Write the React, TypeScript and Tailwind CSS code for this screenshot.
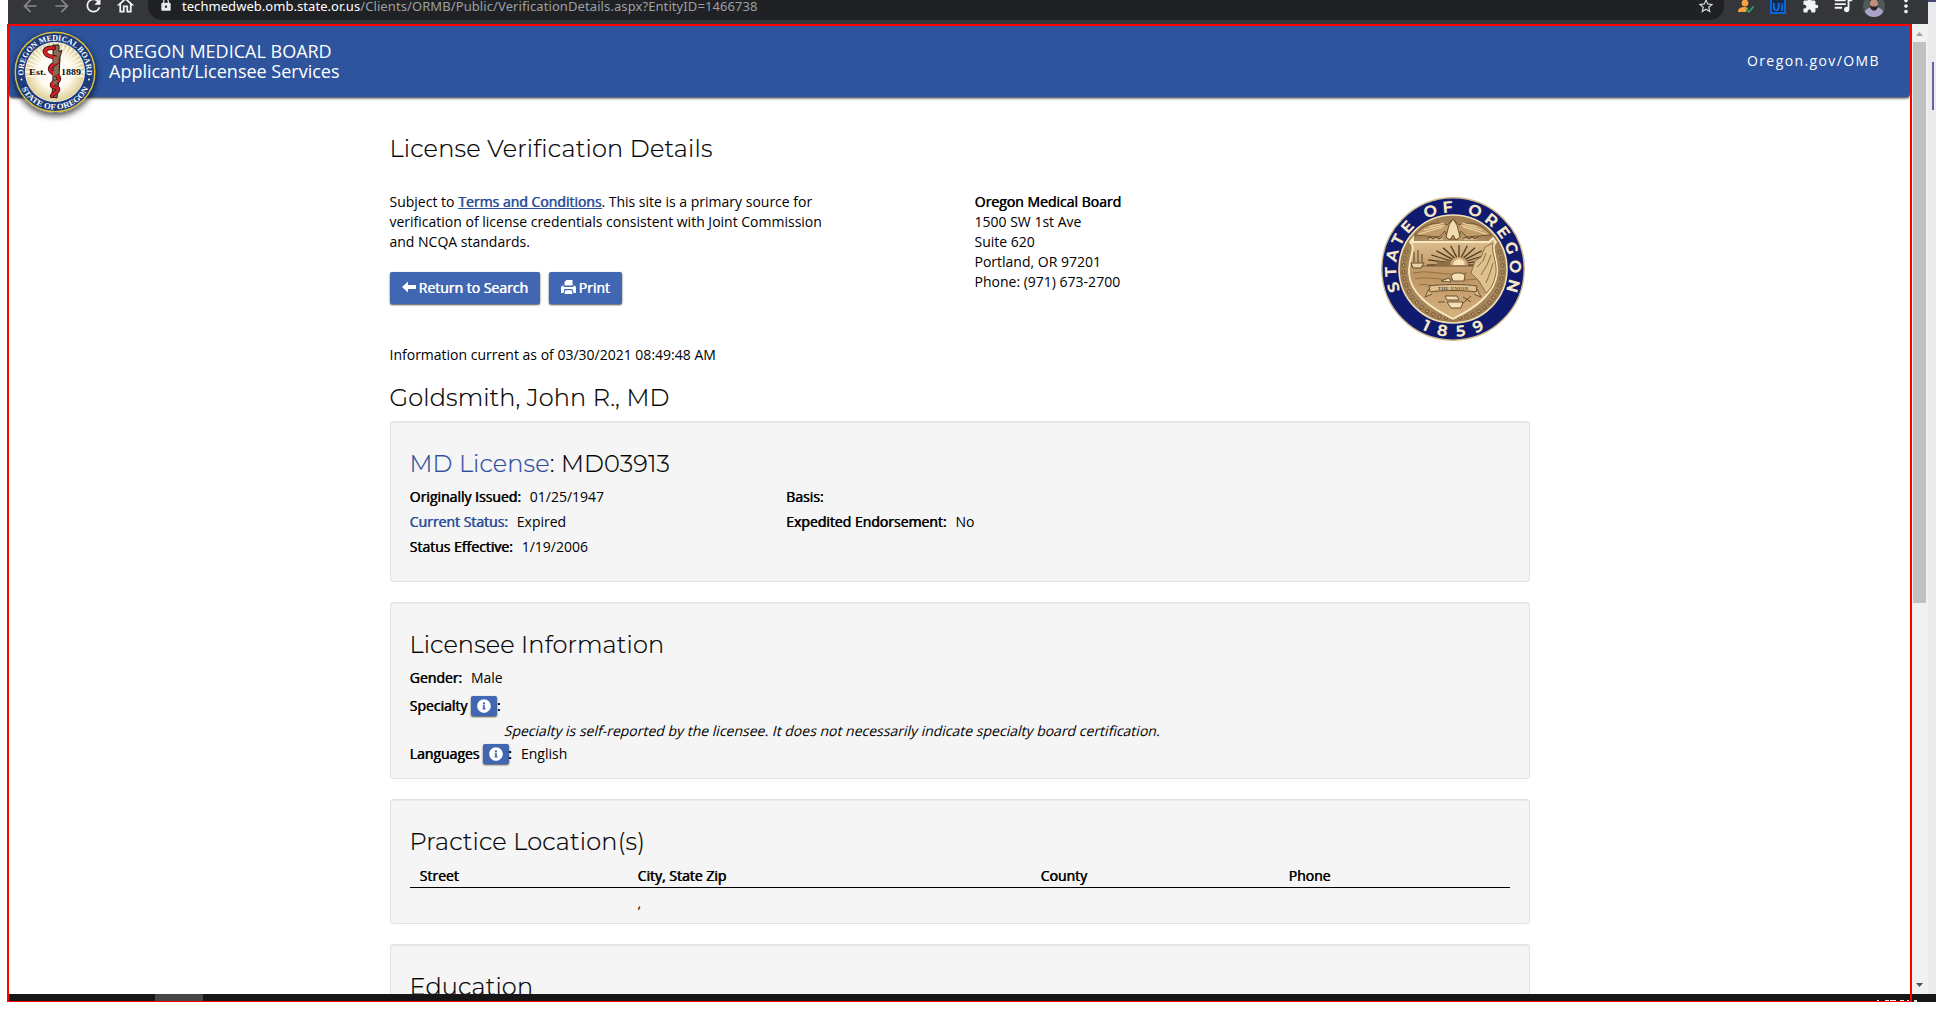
import type { ReactNode } from "react";
import { FaInfoCircle } from "react-icons/fa";
import { MdArrowBack, MdArrowForward, MdRefresh, MdOutlineHome, MdLock, MdStarBorder, MdQueueMusic, MdMoreVert, MdExtension } from "react-icons/md";

const HEAD = "font-['Montserrat','Inter',sans-serif] text-[24px] leading-[30px] font-light whitespace-nowrap [-webkit-text-stroke:0.2px_currentColor]";

function B({ children, className = "" }: { children: ReactNode; className?: string }) {
  return <span className={"[text-shadow:0.6px_0_0_currentColor] " + className}>{children}</span>;
}

function MedicalBoardSeal() {
  const rays = Array.from({ length: 40 }, (_, i) => (i * Math.PI) / 20);
  return (
    <svg viewBox="-41 -41 82 82" className="block h-[82px] w-[82px] rounded-full shadow-[0_3px_6px_rgba(0,0,0,0.7)]">
      <defs>
        <path id="omb-top" d="M-30.6 8A31.6 31.6 0 1 1 30.6 8" />
        <path id="omb-bottom" d="M-37.4 0A37.4 37.4 0 0 0 37.4 0" />
        <radialGradient id="omb-glow">
          <stop offset="0" stopColor="#fff" />
          <stop offset="0.55" stopColor="#fdfbf1" />
          <stop offset="1" stopColor="#dfcf94" />
        </radialGradient>
      </defs>
      <circle r="41" fill="#1d3c7c" />
      <circle r="39.8" fill="none" stroke="#d9bd3c" strokeWidth="1.5" />
      <circle r="29.6" fill="url(#omb-glow)" stroke="#fff" strokeWidth="0.8" />
      {rays.map((a) =>
        Math.sin(a) < 0.2 ? (
          <line key={a} x1={Math.cos(a) * 13} y1={Math.sin(a) * 13} x2={Math.cos(a) * 29} y2={Math.sin(a) * 29} stroke="#fffdf2" strokeWidth="1.3" />
        ) : null
      )}
      <g fill="#fff" fontFamily="'Liberation Serif', serif" fontWeight="700" fontSize="8">
        <text textAnchor="middle"><textPath href="#omb-top" startOffset="50%" textLength="106" lengthAdjust="spacingAndGlyphs">OREGON MEDICAL BOARD</textPath></text>
        <text textAnchor="middle"><textPath href="#omb-bottom" startOffset="50%" textLength="83" lengthAdjust="spacingAndGlyphs">STATE OF OREGON</textPath></text>
      </g>
      <circle cx="-33.500" cy="7.5" r="0.9" fill="#fff" />
      <circle cx="34" cy="7.5" r="0.9" fill="#fff" />
      <path d="M-2-27L4-27 4-20 7-22 5-15 4 5 2 26-3 25-2 5Z" fill="#8a6a50" stroke="#221a14" strokeWidth="1" />
      <path d="M-1-24C-8-25-12-22-9-18S3-16 3-12-5-8-5-3 5 2 4 7-3 9-3 13 4 14 3 18-2 20-3 24" fill="none" stroke="#3a0d0d" strokeWidth="4.4" strokeLinecap="round" />
      <path d="M-1-24C-8-25-12-22-9-18S3-16 3-12-5-8-5-3 5 2 4 7-3 9-3 13 4 14 3 18-2 20-3 24" fill="none" stroke="#cf2127" strokeWidth="3" strokeLinecap="round" />
      <path d="M-1-15L4-16 3-9-2-8ZM-2-1L3-3 3 2-2 4ZM-2 9L2 8 2 12-2 13Z" fill="#8a6a50" />
      <g fill="#111" fontFamily="'Liberation Serif', serif" fontWeight="700" fontSize="8">
        <text x="-26" y="3" textLength="17" lengthAdjust="spacingAndGlyphs">Est.</text>
        <text x="6" y="3" textLength="20" lengthAdjust="spacingAndGlyphs">1889</text>
      </g>
    </svg>
  );
}

function StateSeal() {
  const rays = Array.from({ length: 13 }, (_, i) => Math.PI + (i * Math.PI) / 12);
  const beads = Array.from({ length: 29 }, (_, i) => -0.35 + (i * (Math.PI + 0.7)) / 28);
  return (
    <svg viewBox="-72 -72 144 144" className="block h-[144px] w-[144px]">
      <defs>
        <path id="or-sides" d="M-40.2 40.2A56.8 56.8 0 1 1 40.2 40.2" />
        <path id="or-bottom" d="M-68 0A68 68 0 0 0 68 0" />
        <radialGradient id="or-bronze">
          <stop offset="0" stopColor="#d9b98a" />
          <stop offset="1" stopColor="#9c7b50" />
        </radialGradient>
        <linearGradient id="or-shield" x1="0" y1="0" x2="0" y2="1">
          <stop offset="0" stopColor="#dfc091" />
          <stop offset="0.45" stopColor="#bd9564" />
          <stop offset="1" stopColor="#d6b27f" />
        </linearGradient>
      </defs>
      <circle r="71.2" fill="#101a6e" stroke="#cfb98c" strokeWidth="1.4" />
      <circle r="54" fill="url(#or-bronze)" stroke="#f1e2b6" strokeWidth="1.6" />
      <g fill="#f6e8c4" fontFamily="Montserrat, Lato, sans-serif" fontWeight="700" fontSize="16">
        <text textAnchor="middle"><textPath href="#or-sides" startOffset="50%" textLength="222">STATE OF OREGON</textPath></text>
        <text textAnchor="middle"><textPath href="#or-bottom" startOffset="50%" textLength="66">1859</textPath></text>
      </g>
      {beads.map((a) => (
        <circle key={a} cx={Math.cos(a) * 49.5} cy={Math.sin(a) * 49.5} r="1.5" fill="#c8a877" stroke="#5d4527" strokeWidth="0.8" />
      ))}
      <path d="M-40-27H36L40-31 43-27C37-22 45-10 44 4 42 24 24 38 0 50-24 38-43 24-44 4-45-10-36-22-43-27L-40-31Z" fill="url(#or-shield)" stroke="#f7e9bf" strokeWidth="1.8" />
      <path d="M-38-34C-28-46-16-48-6-44L0-50 6-44C16-48 28-46 38-34L14-32 8-38 5-30H-5L-8-38-14-32Z" fill="#c09c69" stroke="#74572f" strokeWidth="1" />
      <path d="M-4-44L-7-32-3-29 0-34 3-29 7-32 4-44 0-50Z" fill="#f1dcae" stroke="#5d4527" strokeWidth="0.9" />
      <path d="M-34-35L-10-42M-29-39L-8-44M-24-42L-9-46M34-35L10-42M29-39L8-44M24-42L9-46M-24-30H-10M10-30H24" stroke="#f0dcae" strokeWidth="1" />
      <path d="M-26-30l3-2 3 2 3-2 3 2 3-2M10-30l3-2 3 2 3-2 3 2 3-2" fill="none" stroke="#5d4527" strokeWidth="1" />
      {rays.map((a) => (
        <line key={a} x1={6 + Math.cos(a) * 9} y1={-4 + Math.sin(a) * 8} x2={6 + Math.cos(a) * 32} y2={-4 + Math.sin(a) * 20} stroke="#4d3b24" strokeWidth="1.3" />
      ))}
      <path d="M0-4A6 6 0 0 1 12-4Z" fill="#f6e4b5" />
      <path d="M-42-3H20" stroke="#5d4527" strokeWidth="0.8" />
      <path d="M-42-6H-29L-32-1H-40ZM-39-7V-17M-35-7V-19M-31-7V-15" fill="#ecd4a2" stroke="#5d4527" strokeWidth="1" />
      <path d="M-18-3L-14-9-10-6-5-10-2-3Z" fill="#8d6f46" />
      <path d="M18 4L22-8 28-12 32-22 40-26C38-16 44-8 43 4 41 14 38 20 33 24L26 12Z" fill="#dfc190" stroke="#8d6f46" strokeWidth="1" />
      <path d="M24-2L30-8 33-16M28 6L34-4 38-14M33 14L37 4 40-6" fill="none" stroke="#8d6f46" strokeWidth="1" />
      <path d="M-40 4C-20 0-10 8 14 4M-38 10C-20 6-10 14 24 10M-34 16C-26 14-22 18-16 16" fill="none" stroke="#94703f" strokeWidth="1" />
      <path d="M-2 7C0 3 9 3 12 6L11 12H0ZM-12 12L-4 9-2 13Z" fill="#f3dfb2" stroke="#5d4527" strokeWidth="0.9" />
      <path d="M-24 17C-14 15 14 15 24 17L23 23C12 21-12 21-23 23ZM-24 20L-28 28-21 25M24 20L28 28 21 25" fill="#dcbf8c" stroke="#5d4527" strokeWidth="0.9" />
      <text x="0" y="21" textAnchor="middle" fontSize="4.6" fontFamily="'Liberation Serif', serif" fontWeight="700" fill="#5d4527" textLength="30">THE UNION</text>
      <path d="M-8 27H4L6 31H-6ZM-6 33H10L8 39H-2ZM10 28L18 33M18 27L9 35M-15 33H-8" fill="#f3dfb2" stroke="#5d4527" strokeWidth="0.9" />
    </svg>
  );
}

function BrowserBar() {
  return (
    <div className="ml-2 flex h-6 w-[1920px] items-start overflow-hidden bg-[#35363a] text-[#f1f3f4]">
      <MdArrowBack className="mt-[-4px] ml-[12px] size-5 text-[#86888c]" />
      <MdArrowForward className="mt-[-4px] ml-[12px] size-5 text-[#86888c]" />
      <MdRefresh className="mt-[-5px] ml-[11px] size-[21px]" />
      <MdOutlineHome className="mt-[-5px] ml-[11px] size-[21px]" />
      <div className="ml-[12px] flex h-5 w-[1576px] items-start rounded-b-[14px] bg-[#202124] pr-[9px] pl-[11px]">
        <MdLock className="mt-[-2px] size-[14px] text-[#e8eaed]" />
        <div className="mt-[-4px] ml-[9px] font-['Noto_Sans',sans-serif] text-[13px] leading-5 whitespace-nowrap text-[#9aa0a6]">
          <span className="tracking-[0.05px] text-white">techmedweb.omb.state.or.us</span>
          <span className="tracking-[0.09px]">/Clients/ORMB/Public/VerificationDetails.aspx?EntityID=1466738</span>
        </div>
        <MdStarBorder className="mt-[-3px] ml-auto size-[18px] text-[#d5d7da]" />
      </div>
      <svg viewBox="0 0 16 14" className="mt-[-1px] ml-[14px] h-[14px] w-4">
        <circle cx="7" cy="4" r="3.4" fill="#f9a13c" />
        <path d="M0 13C0 9 3 8 7 8L10 9 8 13Z" fill="#f9a13c" />
        <path d="M8 10L11 13 15.500 7.500" fill="none" stroke="#2fa866" strokeWidth="1.6" />
      </svg>
      <div className="mt-[-2px] ml-[16px] flex h-4 w-4 items-center justify-center border-2 border-[#0a66d8] bg-[#15294a] font-['Open_Sans',sans-serif] text-[11px] leading-none font-bold text-[#0a74f0]">Ui</div>
      <MdExtension className="mt-[-3px] ml-[16px] size-[17px]" />
      <MdQueueMusic className="mt-[-6px] ml-[13px] size-[22px]" />
      <svg viewBox="0 0 22 22" className="mt-[-5px] ml-[9px] size-[22px]">
        <defs><clipPath id="avatar-clip"><circle cx="11" cy="11" r="11" /></clipPath></defs>
        <g clipPath="url(#avatar-clip)">
          <rect width="22" height="22" fill="#4d5a58" />
          <path d="M0 22C1 13 7 12 11 12S21 13 22 22Z" fill="#aaa3c8" />
          <ellipse cx="11" cy="8.500" rx="4" ry="5" fill="#c08f7a" />
          <path d="M7 10C7 14 9 15.500 11 15.500S15 14 15 10C14 12 8 12 7 10Z" fill="#2d2222" />
          <path d="M6.500 7C6.500 2 15.500 2 15.500 7L14 5H8Z" fill="#1f1a1a" />
        </g>
      </svg>
      <MdMoreVert className="mt-[-5px] ml-[10px] size-[22px]" />
    </div>
  );
}

function SiteHeader() {
  return (
    <header className="relative z-10 flex h-[71px] shrink-0 items-start rounded-b-[4px] bg-[#2d549c] pl-[5px] font-['Open_Sans',sans-serif] text-white shadow-[0_1px_3px_rgba(0,0,0,0.9)]">
      <div className="mt-[5px] h-[82px] w-[82px] shrink-0"><MedicalBoardSeal /></div>
      <div className="mt-[15px] ml-[13px] text-[18px] leading-5 whitespace-nowrap">
        <div>OREGON MEDICAL BOARD</div>
        <div>Applicant/Licensee Services</div>
      </div>
      <div className="mt-[25px] mr-[30px] ml-auto text-[14px] leading-5 tracking-[1.4px]">Oregon.gov/OMB</div>
    </header>
  );
}

function Panel({ children, className }: { children: ReactNode; className: string }) {
  return (
    <section className={"rounded-[3px] border border-[#e2e2e2] bg-[#f5f5f5] px-[19px] shadow-[inset_0_1px_1px_rgba(0,0,0,0.05)] " + className}>
      {children}
    </section>
  );
}

function InfoButton() {
  return (
    <span className="ml-[3.5px] flex h-5 w-[26px] items-center justify-center rounded-[2px] bg-[#4267b2] shadow-[0_1px_2px_rgba(0,0,0,0.7)]">
      <FaInfoCircle className="size-[14px] text-white" />
    </span>
  );
}

function Field({ label, value, blue }: { label: string; value?: string; blue?: boolean }) {
  return (
    <div className="flex h-[25px] items-center gap-[9px]">
      <B className={blue ? "text-[#2d4f9b]" : ""}>{label}</B>
      {value && <span>{value}</span>}
    </div>
  );
}

function Content() {
  return (
    <main className="ml-[380.5px] w-[1140px] font-['Open_Sans',sans-serif] text-[14px] leading-5 whitespace-nowrap text-black">
      <h1 className={HEAD + " mt-[37px] tracking-[0.24px]"}>License Verification Details</h1>
      <div className="mt-[28px] flex h-[144px]">
        <div className="w-[585px]">
          <p>Subject to <a className="text-[#2d4f9b] underline"><B>Terms and Conditions</B></a>. This site is a primary source for</p>
          <p>verification of license credentials consistent with Joint Commission</p>
          <p>and NCQA standards.</p>
          <div className="mt-[20px] flex gap-[9px] text-white">
            <button className="flex h-8 w-[150px] items-center rounded-[2px] bg-[#4267b2] pl-[12px] shadow-[0_1px_2px_rgba(0,0,0,0.7)]">
              <svg viewBox="0 0 14 12" className="mt-[-2px] mr-[3px] h-[12px] w-[14px]"><path d="M0 6L6 0.500V4H14V8H6V11.500Z" fill="#fff" /></svg>
              <B>Return to Search</B>
            </button>
            <button className="flex h-8 w-[73px] items-center rounded-[2px] bg-[#4267b2] pl-[12px] shadow-[0_1px_2px_rgba(0,0,0,0.7)]">
              <svg viewBox="0 0 15 14" className="mt-[-2px] mr-[3px] h-[14px] w-[15px]">
                <path d="M3.500 5.500V2L5.500 0H11.500V5.500ZM0 7L1.500 5.500H2.500V7H12.500V5.500H13.500L15 7V13H12.500L11.500 9H3.500L2.500 13H0ZM4.300 10.200H10.700L11.500 14H3.500Z" fill="#fff" />
              </svg>
              <B>Print</B>
            </button>
          </div>
        </div>
        <address className="not-italic">
          <B>Oregon Medical Board</B><br />1500 SW 1st Ave<br />Suite 620<br />Portland, OR 97201<br />Phone: (971) 673-2700
        </address>
        <div className="mt-[5px] mr-[5px] ml-auto"><StateSeal /></div>
      </div>
      <p className="mt-[9px]">Information current as of 03/30/2021 08:49:48 AM</p>
      <h2 className={HEAD + " mt-[18px] tracking-[0.16px]"}>Goldsmith, John R., MD</h2>

      <Panel className="mt-[8px] h-[161px] pt-[27px]">
        <h3 className={HEAD + " tracking-[0.16px]"}><span className="text-[#2d4f9b]">MD License</span>: MD03913</h3>
        <div className="mt-[5px] grid grid-cols-[376.5px_1fr]">
          <div>
            <Field label="Originally Issued:" value="01/25/1947" />
            <Field label="Current Status:" value="Expired" blue />
            <Field label="Status Effective:" value="1/19/2006" />
          </div>
          <div>
            <Field label="Basis:" />
            <Field label="Expedited Endorsement:" value="No" />
          </div>
        </div>
      </Panel>

      <Panel className="mt-[20px] h-[177px] pt-[27px]">
        <h3 className={HEAD + " tracking-[0.16px]"}>Licensee Information</h3>
        <div className="mt-[5px]"><Field label="Gender:" value="Male" /></div>
        <div className="mt-[6px] flex h-5 items-center"><B>Specialty</B><InfoButton /><B>:</B></div>
        <div className="mt-[5px] ml-[95.5px] h-5 w-fit skew-x-[-14deg]">Specialty is self-reported by the licensee. It does not necessarily indicate specialty board certification.</div>
        <div className="mt-[3px] flex h-5 items-center"><B>Languages</B><InfoButton /><B className="-ml-px">:</B><span className="ml-[9.5px]">English</span></div>
      </Panel>

      <Panel className="mt-[20px] h-[125px] pt-[27px]">
        <h3 className={HEAD + " tracking-[0.2px]"}>Practice Location(s)</h3>
        <div className="mt-[6px] grid h-[25px] grid-cols-[218px_403px_248px_1fr] border-b border-black pl-[10px] leading-[25px]">
          <B>Street</B><B>City, State Zip</B><B>County</B><B>Phone</B>
        </div>
        <div className="mt-[5px] grid grid-cols-[218px_403px_248px_1fr] pl-[10px]"><span /><span>,</span></div>
      </Panel>

      <Panel className="mt-[20px] h-[160px] pt-[27px]">
        <h3 className={HEAD + " tracking-[0.16px]"}>Education</h3>
      </Panel>
    </main>
  );
}

function Scrollbar() {
  return (
    <div className="flex h-[970px] w-4 flex-col items-center bg-[#f1f1f1]">
      <svg viewBox="0 0 7 4" className="mt-[8px] mr-px h-1 w-[7px] shrink-0"><path d="M0 4L3.500 0 7 4Z" fill="#a3a3a3" /></svg>
      <div className="mt-[6px] mr-px h-[561px] w-[13px] shrink-0 bg-[#c1c1c1]" />
      <svg viewBox="0 0 7 4" className="mt-auto mr-px mb-[7px] h-1 w-[7px] shrink-0"><path d="M0 0L3.500 4 7 0Z" fill="#505050" /></svg>
    </div>
  );
}

function Taskbar() {
  return (
    <div className="flex h-[8px] shrink-0 items-start border-b border-[#ff0000] bg-[#161616]">
      <div className="ml-[146px] h-[7px] w-12 bg-[#454545]" />
      <svg viewBox="0 0 33 1" className="mt-[6px] ml-auto h-px w-[33px]">
        <path d="M0 .5H2M8 .5H12M13 .5H19M23 .5H27M30 .5H32" stroke="#e8e8e8" strokeWidth="1" />
      </svg>
    </div>
  );
}

export default function App() {
  return (
    <div className="flex h-[1027px] w-[1936px] overflow-hidden bg-white">
      <div className="w-[1928px] shrink-0">
        <BrowserBar />
        <div className="flex h-[978px]">
          <div className="ml-[7px] flex h-[978px] w-[1905px] shrink-0 flex-col overflow-hidden border-2 border-b-0 border-[#ff0000]">
            <SiteHeader />
            <div className="h-[897px] shrink-0 overflow-hidden"><Content /></div>
            <Taskbar />
          </div>
          <div className="flex h-[978px] w-4 shrink-0 flex-col">
            <Scrollbar />
            <div className="flex h-[8px] items-end bg-[#161616]"><div className="ml-[2px] h-[2px] w-[3px] bg-[#e8e8e8]" /></div>
          </div>
        </div>
      </div>
      <div className="flex h-[1002px] w-2 flex-col bg-[#eaeaea]">
        <div className="h-[2px] bg-[#464775]" />
        <div className="mt-[60px] ml-[4px] h-[48px] w-[2px] bg-[#6264a7]" />
        <div className="mt-auto h-[8px] bg-[#161616]" />
      </div>
    </div>
  );
}
